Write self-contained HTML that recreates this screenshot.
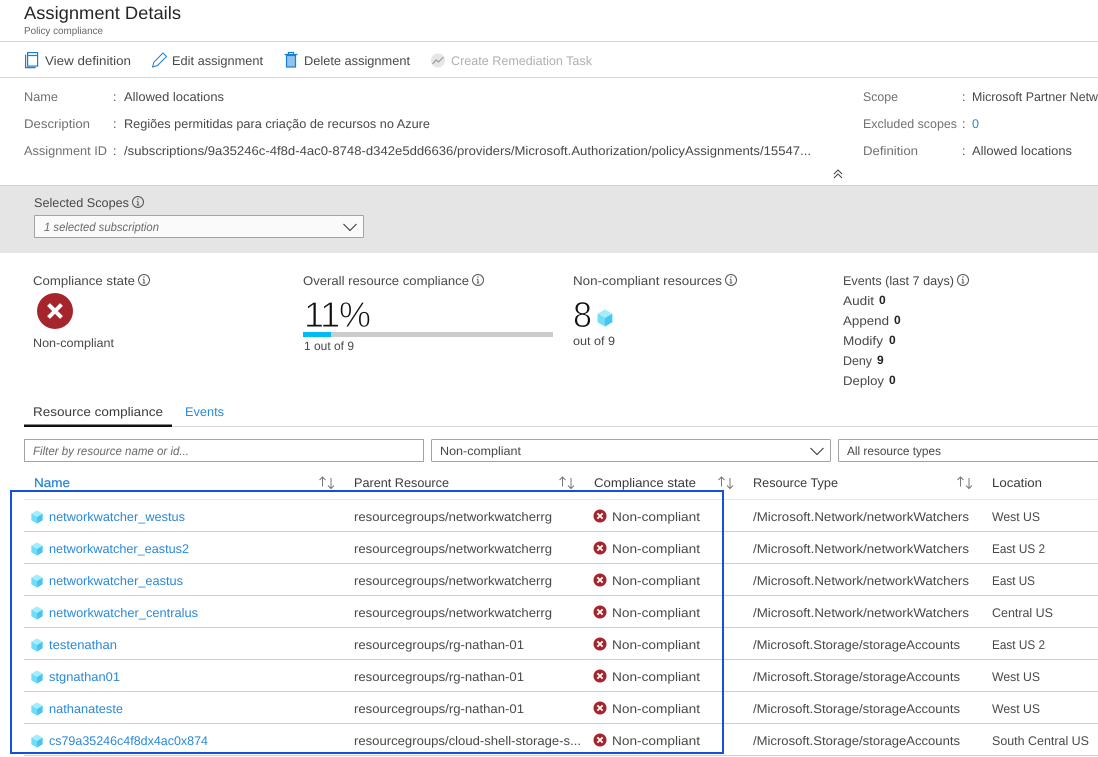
<!DOCTYPE html>
<html lang="en">
<head>
<meta charset="utf-8">
<title>Assignment Details</title>
<style>
html,body{margin:0;padding:0;background:#fff;width:1098px;height:757px;overflow:hidden}
svg{display:block}
text{font-family:"Liberation Sans",sans-serif;font-size:12.5px;fill:#484848;text-rendering:geometricPrecision}
.l{fill:#707070}
.b{fill:#2a88d8}
.h{fill:#3a3a3a}
.g{fill:#b0b0b0}
.i{font-style:italic;font-size:12px;fill:#6a6a6a}
.n{fill:#222;font-weight:bold;font-size:12px}
.big{font-size:36px;fill:#111;stroke:#fff;stroke-width:.9px}
</style>
</head>
<body>
<svg width="1098" height="757" viewBox="0 0 1098 757" xmlns="http://www.w3.org/2000/svg">
<defs>
<g id="cube">
<path d="M0-6.500 5.600-3.300V3.300L0 6.500-5.600 3.300V-3.300Z" fill="#7fe3fb"/>
<path d="M-5.600-3.300 0 0V6.500L-5.600 3.300Z" fill="#6fdcf8"/>
<path d="M5.600-3.300 0 0V6.500L5.600 3.300Z" fill="#45c6ee"/>
<path d="M0-6.500 5.600-3.300 0 0-5.600-3.300Z" fill="#a4edfd"/>
</g>
<g id="err">
<circle r="6.500" fill="#a4262c"/>
<path d="M-2.600-2.600 2.600 2.600M2.600-2.600-2.600 2.600" stroke="#fff" stroke-width="1.800" fill="none"/>
</g>
<g id="info" fill="none" stroke="#555" stroke-width="1">
<circle r="5.500"/>
<path d="M0-.8V3M-1.200 3H1.200M-1.200-.8H0"/>
<path d="M-.6-3H.6" stroke-width="1.200"/>
</g>
<g id="sort" fill="none" stroke="#777" stroke-width="1">
<path d="M-4.500 4.500V-5M-7.500-2-4.500-5-1.500-2"/>
<path d="M4-4V6.500M1 3.500 4 6.500 7 3.500"/>
</g>
</defs>

<!-- Header -->
<text x="24" y="19" style="font-size:18px;fill:#262626" textLength="157" lengthAdjust="spacingAndGlyphs">Assignment Details</text>
<text x="24" y="34" style="font-size:10px;fill:#666" textLength="79" lengthAdjust="spacingAndGlyphs">Policy compliance</text>
<rect x="0" y="41" width="1098" height="1" fill="#d6d6d6"/>
<rect x="0" y="77" width="1098" height="1" fill="#d6d6d6"/>

<!-- Toolbar -->
<g fill="none" stroke="#1a7fd4" stroke-width="1.200">
<rect x="27.600" y="52.600" width="10" height="13.500" fill="#fff"/>
<path d="M25.600 54.600V67.600H35.600"/>
<path d="M27 55.500H38"/>
<path d="M152.500 67 154 62 163 53 166.500 56.500 157.500 65.500Z" stroke-width="1"/>
</g>
<g>
<rect x="286.500" y="55.500" width="9" height="11.500" fill="#8fc4ec" stroke="#1a7fd4" stroke-width="1.200"/>
<path d="M284.500 54.500H297.500M288.500 54V52.500H293.500V54" fill="none" stroke="#1a7fd4" stroke-width="1.200"/>
</g>
<circle cx="438" cy="60.500" r="7" fill="#e6e6e6"/>
<path d="M432.500 64 436 60 438.500 62 443.500 57" fill="none" stroke="#9a9a9a" stroke-width="1.200"/>
<text x="45" y="65" textLength="86" lengthAdjust="spacingAndGlyphs">View definition</text>
<text x="172" y="65" textLength="91" lengthAdjust="spacingAndGlyphs">Edit assignment</text>
<text x="304" y="65" textLength="106" lengthAdjust="spacingAndGlyphs">Delete assignment</text>
<text x="451" y="65" class="g" textLength="141" lengthAdjust="spacingAndGlyphs">Create Remediation Task</text>

<!-- Details -->
<text x="24" y="101" class="l" textLength="34" lengthAdjust="spacingAndGlyphs">Name</text>
<text x="113" y="101">:</text>
<text x="124" y="101" textLength="100" lengthAdjust="spacingAndGlyphs">Allowed locations</text>
<text x="24" y="128" class="l" textLength="66" lengthAdjust="spacingAndGlyphs">Description</text>
<text x="113" y="128">:</text>
<text x="124" y="128" textLength="306" lengthAdjust="spacingAndGlyphs">Regiões permitidas para criação de recursos no Azure</text>
<text x="24" y="155" class="l" textLength="83" lengthAdjust="spacingAndGlyphs">Assignment ID</text>
<text x="113" y="155">:</text>
<text x="124" y="155" textLength="687" lengthAdjust="spacingAndGlyphs">/subscriptions/9a35246c-4f8d-4ac0-8748-d342e5dd6636/providers/Microsoft.Authorization/policyAssignments/15547...</text>
<text x="863" y="101" class="l" textLength="35" lengthAdjust="spacingAndGlyphs">Scope</text>
<text x="962" y="101">:</text>
<text x="972" y="101" textLength="126" lengthAdjust="spacingAndGlyphs">Microsoft Partner Netw</text>
<text x="863" y="128" class="l" textLength="94" lengthAdjust="spacingAndGlyphs">Excluded scopes</text>
<text x="962" y="128">:</text>
<text x="972" y="128" class="b" textLength="7" lengthAdjust="spacingAndGlyphs">0</text>
<text x="863" y="155" class="l" textLength="55" lengthAdjust="spacingAndGlyphs">Definition</text>
<text x="962" y="155">:</text>
<text x="972" y="155" textLength="100" lengthAdjust="spacingAndGlyphs">Allowed locations</text>
<path d="M834 174 838 170 842 174M834 178 838 174 842 178" fill="none" stroke="#444" stroke-width="1"/>

<!-- Scope band -->
<rect x="0" y="185" width="1098" height="68" fill="#e5e5e5"/>
<rect x="0" y="185" width="1098" height="1" fill="#d2d2d2"/>
<text x="34" y="207" textLength="95" lengthAdjust="spacingAndGlyphs">Selected Scopes</text>
<use href="#info" x="138" y="202"/>
<rect x="34.500" y="215.500" width="329" height="22" rx="1" fill="#fafafa" stroke="#a3a3a3"/>
<text x="44" y="231" class="i" textLength="115" lengthAdjust="spacingAndGlyphs">1 selected subscription</text>
<path d="M343.500 224 350 230.500 356.500 224" fill="none" stroke="#333" stroke-width="1"/>

<!-- Summary -->
<text x="33" y="285" textLength="102" lengthAdjust="spacingAndGlyphs">Compliance state</text>
<use href="#info" x="144" y="280"/>
<circle cx="55" cy="311" r="18" fill="#a4262c"/>
<path d="M48.500 304.500 61.500 317.500M61.500 304.500 48.500 317.500" stroke="#fff" stroke-width="4" fill="none"/>
<text x="33" y="347" style="font-size:12px" textLength="81" lengthAdjust="spacingAndGlyphs">Non-compliant</text>

<text x="303" y="285" textLength="166" lengthAdjust="spacingAndGlyphs">Overall resource compliance</text>
<use href="#info" x="478" y="280"/>
<text x="304" y="327" class="big" textLength="67" lengthAdjust="spacing">11%</text>
<rect x="303" y="332" width="250" height="5" fill="#cccccc"/>
<rect x="303" y="332" width="28" height="5" fill="#00bcf2"/>
<text x="304" y="350" style="font-size:12px" textLength="50" lengthAdjust="spacingAndGlyphs">1 out of 9</text>

<text x="573" y="285" textLength="149" lengthAdjust="spacingAndGlyphs">Non-compliant resources</text>
<use href="#info" x="731" y="280"/>
<text x="573" y="327" class="big" textLength="19" lengthAdjust="spacingAndGlyphs">8</text>
<use href="#cube" transform="translate(605 318) scale(1.300)"/>
<text x="573" y="345" style="font-size:12px" textLength="42" lengthAdjust="spacingAndGlyphs">out of 9</text>

<text x="843" y="285" textLength="111" lengthAdjust="spacingAndGlyphs">Events (last 7 days)</text>
<use href="#info" x="963" y="280"/>
<text x="843" y="305" textLength="31" lengthAdjust="spacingAndGlyphs">Audit</text><text x="879" y="304" class="n">0</text>
<text x="843" y="325" textLength="46" lengthAdjust="spacingAndGlyphs">Append</text><text x="894" y="324" class="n">0</text>
<text x="843" y="345" textLength="40" lengthAdjust="spacingAndGlyphs">Modify</text><text x="889" y="344" class="n">0</text>
<text x="843" y="365" textLength="29" lengthAdjust="spacingAndGlyphs">Deny</text><text x="877" y="364" class="n">9</text>
<text x="843" y="385" textLength="41" lengthAdjust="spacingAndGlyphs">Deploy</text><text x="889" y="384" class="n">0</text>

<!-- Tabs -->
<text x="33" y="416" class="h" textLength="130" lengthAdjust="spacingAndGlyphs">Resource compliance</text>
<text x="185" y="416" class="b" textLength="39" lengthAdjust="spacingAndGlyphs">Events</text>
<rect x="24" y="426" width="1074" height="1" fill="#d6d6d6"/>
<rect x="24" y="424.500" width="148" height="2.500" fill="#111"/>

<!-- Filters -->
<rect x="24.500" y="439.500" width="399" height="22" fill="#fff" stroke="#a3a3a3"/>
<text x="33" y="455" class="i" textLength="156" lengthAdjust="spacingAndGlyphs">Filter by resource name or id...</text>
<rect x="431.500" y="439.500" width="399" height="22" rx="1" fill="#fff" stroke="#a3a3a3"/>
<text x="440" y="455" style="font-size:12px" textLength="81" lengthAdjust="spacingAndGlyphs">Non-compliant</text>
<path d="M810.500 448 817 454.500 823.500 448" fill="none" stroke="#333" stroke-width="1"/>
<rect x="838.500" y="439.500" width="270" height="22" rx="1" fill="#fff" stroke="#a3a3a3"/>
<text x="847" y="455" style="font-size:12px" textLength="94" lengthAdjust="spacingAndGlyphs">All resource types</text>

<!-- Table header -->
<text x="34" y="487" class="b" style="stroke:#2a88d8;stroke-width:.25px" textLength="36" lengthAdjust="spacingAndGlyphs">Name</text>
<use href="#sort" x="327" y="482"/>
<text x="354" y="487" class="h" textLength="95" lengthAdjust="spacingAndGlyphs">Parent Resource</text>
<use href="#sort" x="567" y="482"/>
<text x="594" y="487" class="h" textLength="102" lengthAdjust="spacingAndGlyphs">Compliance state</text>
<use href="#sort" x="726" y="482"/>
<text x="753" y="487" class="h" textLength="85" lengthAdjust="spacingAndGlyphs">Resource Type</text>
<use href="#sort" x="965" y="482"/>
<text x="992" y="487" class="h" textLength="50" lengthAdjust="spacingAndGlyphs">Location</text>
<rect x="24" y="499" width="1074" height="1" fill="#e8e8e8"/>

<!-- Row 1 -->
<use href="#cube" x="37" y="517"/>
<text x="49" y="521" class="b" textLength="136" lengthAdjust="spacingAndGlyphs">networkwatcher_westus</text>
<text x="354" y="521" textLength="198" lengthAdjust="spacingAndGlyphs">resourcegroups/networkwatcherrg</text>
<use href="#err" x="600" y="516"/>
<text x="612" y="521" textLength="88" lengthAdjust="spacingAndGlyphs">Non-compliant</text>
<text x="753" y="521" textLength="216" lengthAdjust="spacingAndGlyphs">/Microsoft.Network/networkWatchers</text>
<text x="992" y="521" textLength="48" lengthAdjust="spacingAndGlyphs">West US</text>
<rect x="24" y="531" width="1074" height="1" fill="#cfcfcf"/>

<!-- Row 2 -->
<use href="#cube" x="37" y="549"/>
<text x="49" y="553" class="b" textLength="140" lengthAdjust="spacingAndGlyphs">networkwatcher_eastus2</text>
<text x="354" y="553" textLength="198" lengthAdjust="spacingAndGlyphs">resourcegroups/networkwatcherrg</text>
<use href="#err" x="600" y="548"/>
<text x="612" y="553" textLength="88" lengthAdjust="spacingAndGlyphs">Non-compliant</text>
<text x="753" y="553" textLength="216" lengthAdjust="spacingAndGlyphs">/Microsoft.Network/networkWatchers</text>
<text x="992" y="553" textLength="53" lengthAdjust="spacingAndGlyphs">East US 2</text>
<rect x="24" y="563" width="1074" height="1" fill="#cfcfcf"/>

<!-- Row 3 -->
<use href="#cube" x="37" y="581"/>
<text x="49" y="585" class="b" textLength="134" lengthAdjust="spacingAndGlyphs">networkwatcher_eastus</text>
<text x="354" y="585" textLength="198" lengthAdjust="spacingAndGlyphs">resourcegroups/networkwatcherrg</text>
<use href="#err" x="600" y="580"/>
<text x="612" y="585" textLength="88" lengthAdjust="spacingAndGlyphs">Non-compliant</text>
<text x="753" y="585" textLength="216" lengthAdjust="spacingAndGlyphs">/Microsoft.Network/networkWatchers</text>
<text x="992" y="585" textLength="43" lengthAdjust="spacingAndGlyphs">East US</text>
<rect x="24" y="595" width="1074" height="1" fill="#cfcfcf"/>

<!-- Row 4 -->
<use href="#cube" x="37" y="613"/>
<text x="49" y="617" class="b" textLength="149" lengthAdjust="spacingAndGlyphs">networkwatcher_centralus</text>
<text x="354" y="617" textLength="198" lengthAdjust="spacingAndGlyphs">resourcegroups/networkwatcherrg</text>
<use href="#err" x="600" y="612"/>
<text x="612" y="617" textLength="88" lengthAdjust="spacingAndGlyphs">Non-compliant</text>
<text x="753" y="617" textLength="216" lengthAdjust="spacingAndGlyphs">/Microsoft.Network/networkWatchers</text>
<text x="992" y="617" textLength="61" lengthAdjust="spacingAndGlyphs">Central US</text>
<rect x="24" y="627" width="1074" height="1" fill="#cfcfcf"/>

<!-- Row 5 -->
<use href="#cube" x="37" y="645"/>
<text x="49" y="649" class="b" textLength="68" lengthAdjust="spacingAndGlyphs">testenathan</text>
<text x="354" y="649" textLength="170" lengthAdjust="spacingAndGlyphs">resourcegroups/rg-nathan-01</text>
<use href="#err" x="600" y="644"/>
<text x="612" y="649" textLength="88" lengthAdjust="spacingAndGlyphs">Non-compliant</text>
<text x="753" y="649" textLength="207" lengthAdjust="spacingAndGlyphs">/Microsoft.Storage/storageAccounts</text>
<text x="992" y="649" textLength="53" lengthAdjust="spacingAndGlyphs">East US 2</text>
<rect x="24" y="659" width="1074" height="1" fill="#cfcfcf"/>

<!-- Row 6 -->
<use href="#cube" x="37" y="677"/>
<text x="49" y="681" class="b" textLength="71" lengthAdjust="spacingAndGlyphs">stgnathan01</text>
<text x="354" y="681" textLength="170" lengthAdjust="spacingAndGlyphs">resourcegroups/rg-nathan-01</text>
<use href="#err" x="600" y="676"/>
<text x="612" y="681" textLength="88" lengthAdjust="spacingAndGlyphs">Non-compliant</text>
<text x="753" y="681" textLength="207" lengthAdjust="spacingAndGlyphs">/Microsoft.Storage/storageAccounts</text>
<text x="992" y="681" textLength="48" lengthAdjust="spacingAndGlyphs">West US</text>
<rect x="24" y="691" width="1074" height="1" fill="#cfcfcf"/>

<!-- Row 7 -->
<use href="#cube" x="37" y="709"/>
<text x="49" y="713" class="b" textLength="74" lengthAdjust="spacingAndGlyphs">nathanateste</text>
<text x="354" y="713" textLength="170" lengthAdjust="spacingAndGlyphs">resourcegroups/rg-nathan-01</text>
<use href="#err" x="600" y="708"/>
<text x="612" y="713" textLength="88" lengthAdjust="spacingAndGlyphs">Non-compliant</text>
<text x="753" y="713" textLength="207" lengthAdjust="spacingAndGlyphs">/Microsoft.Storage/storageAccounts</text>
<text x="992" y="713" textLength="48" lengthAdjust="spacingAndGlyphs">West US</text>
<rect x="24" y="723" width="1074" height="1" fill="#cfcfcf"/>

<!-- Row 8 -->
<use href="#cube" x="37" y="741"/>
<text x="49" y="745" class="b" textLength="159" lengthAdjust="spacingAndGlyphs">cs79a35246c4f8dx4ac0x874</text>
<text x="354" y="745" textLength="227" lengthAdjust="spacingAndGlyphs">resourcegroups/cloud-shell-storage-s...</text>
<use href="#err" x="600" y="740"/>
<text x="612" y="745" textLength="88" lengthAdjust="spacingAndGlyphs">Non-compliant</text>
<text x="753" y="745" textLength="207" lengthAdjust="spacingAndGlyphs">/Microsoft.Storage/storageAccounts</text>
<text x="992" y="745" textLength="97" lengthAdjust="spacingAndGlyphs">South Central US</text>
<rect x="24" y="755" width="1074" height="1" fill="#cfcfcf"/>

<!-- Annotation rectangle -->
<rect x="11" y="491" width="712" height="262" fill="none" stroke="#1550d8" stroke-width="2"/>
</svg>
</body>
</html>
